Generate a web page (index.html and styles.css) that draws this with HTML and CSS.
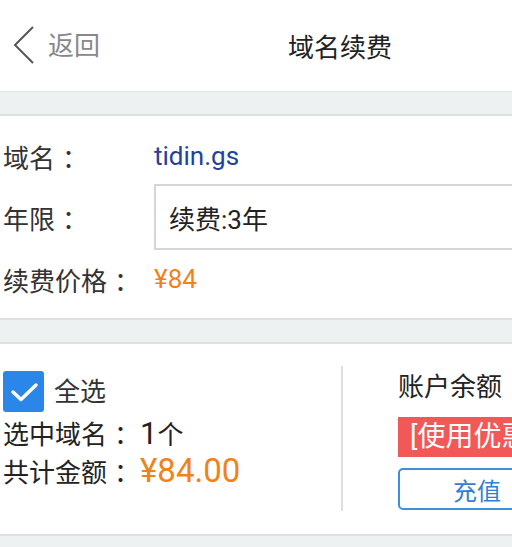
FILE: index.html
```html
<!DOCTYPE html>
<html lang="zh-CN">
<head>
<meta charset="utf-8">
<title>域名续费</title>
<link rel="stylesheet" href="styles.css">
</head>
<body>
<div class="page">
  <header class="topbar">
    <a class="back">
      <svg class="chev" width="22" height="40" viewBox="0 0 22 40"><polyline points="20,1 2,19 20,37" fill="none" stroke="#555" stroke-width="2"/></svg>
      <span class="back-text">返回</span>
    </a>
    <h1 class="title">域名续费</h1>
    <span></span>
  </header>
  <div class="gap gap-top"></div>
  <section class="card info">
    <div class="label">域名<span class="colon">：</span></div>
    <div class="value domain">tidin.gs</div>
    <div class="label">年限<span class="colon">：</span></div>
    <div class="value"><div class="select">续费:3年</div></div>
    <div class="label">续费价格<span class="colon">：</span></div>
    <div class="value price">¥84</div>
  </section>
  <div class="gap"></div>
  <section class="card summary">
    <div class="left">
      <div class="check-row">
        <span class="checkbox"><svg width="41" height="41" viewBox="0 0 41 41"><polyline points="10,21 18,28.5 33,14" fill="none" stroke="#fff" stroke-width="3.5" stroke-linecap="round" stroke-linejoin="round"/></svg></span>
        <span class="check-label">全选</span>
      </div>
      <div class="line count">选中域名<span class="colon">：</span><span class="big">1</span>个</div>
      <div class="line total">共计金额<span class="colon">：</span><span class="amount">¥84.00</span></div>
    </div>
    <div class="right">
      <div class="balance">账户余额</div>
      <div class="coupon">[使用优惠券]</div>
      <button class="recharge">充值</button>
    </div>
  </section>
  <div class="gap gap-end"></div>
</div>
</body>
</html>
```
FILE: styles.css
```css
html, body {
  margin: 0;
  padding: 0;
  background: #ffffff;
  overflow: hidden;
}
body {
  font-family: Roboto, "Noto Sans CJK SC", sans-serif;
  color: #333;
}
.page {
  width: 680px;
}
.topbar {
  height: 91px;
  display: grid;
  grid-template-columns: 1fr auto 1fr;
  align-items: center;
  background: #fff;
}
.back {
  display: flex;
  align-items: center;
  padding-left: 13px;
  gap: 13px;
}
.chev {
  display: block;
}
.back-text {
  font-size: 26px;
  color: #888;
  line-height: 1;
}
.title {
  margin: 0;
  font-size: 26px;
  font-weight: normal;
  color: #222;
}
.gap {
  background: #eef1f2;
  height: 22px;
}
.gap-top {
  border-top: 1px solid #e6e6e6;
}
.gap-end {
  height: 11px;
}
.card {
  background: #fff;
  border-top: 2px solid #e0e0e0;
  border-bottom: 2px solid #e0e0e0;
}
.colon {
  padding-left: 7px;
}
.info {
  display: grid;
  grid-template-columns: 151px 1fr;
  grid-template-rows: 56px 66px 58px;
  padding: 12px 0 10px 3px;
  align-items: center;
  font-size: 26px;
}
.label {
  color: #333;
}
.domain {
  color: #1f429b;
}
.select {
  box-sizing: border-box;
  height: 66px;
  border: 2px solid #d6d6d6;
  display: flex;
  align-items: center;
  padding-left: 13px;
  color: #222;
}
.price {
  color: #f0821c;
}
.summary {
  display: flex;
  height: 190px;
  box-sizing: content-box;
  font-size: 26px;
}
.left {
  flex: 0 0 338px;
  padding: 27px 0 0 3px;
}
.check-row {
  display: flex;
  align-items: center;
  gap: 10px;
  height: 41px;
}
.checkbox {
  width: 41px;
  height: 41px;
  border-radius: 3px;
  background: #2a86e9;
  display: block;
}
.checkbox svg {
  display: block;
}
.check-label {
  color: #333;
  line-height: 1;
}
.line {
  color: #222;
}
.count {
  margin-top: 2px;
  line-height: 40px;
}
.big {
  font-size: 31px;
}
.total {
  line-height: 32px;
}
.amount {
  font-size: 33px;
  color: #f0821c;
}
.right {
  margin: 22px 0 23px;
  border-left: 2px solid #dedede;
  padding-left: 55px;
  display: flex;
  flex-direction: column;
  align-items: flex-start;
}
.balance {
  line-height: 42px;
  height: 42px;
  font-size: 26px;
  color: #222;
}
.coupon {
  margin-top: 9px;
  height: 40px;
  line-height: 40px;
  background: #f25858;
  color: #fff;
  font-size: 28px;
  padding: 0 30px 0 12px;
}
.recharge {
  margin-top: 11px;
  width: 158px;
  height: 42px;
  border: 2px solid #3b8fe0;
  border-radius: 5px;
  background: #fff;
  color: #2f80d2;
  font-family: Roboto, "Noto Sans CJK SC", sans-serif;
  font-size: 24px;
  padding: 0;
}
```
